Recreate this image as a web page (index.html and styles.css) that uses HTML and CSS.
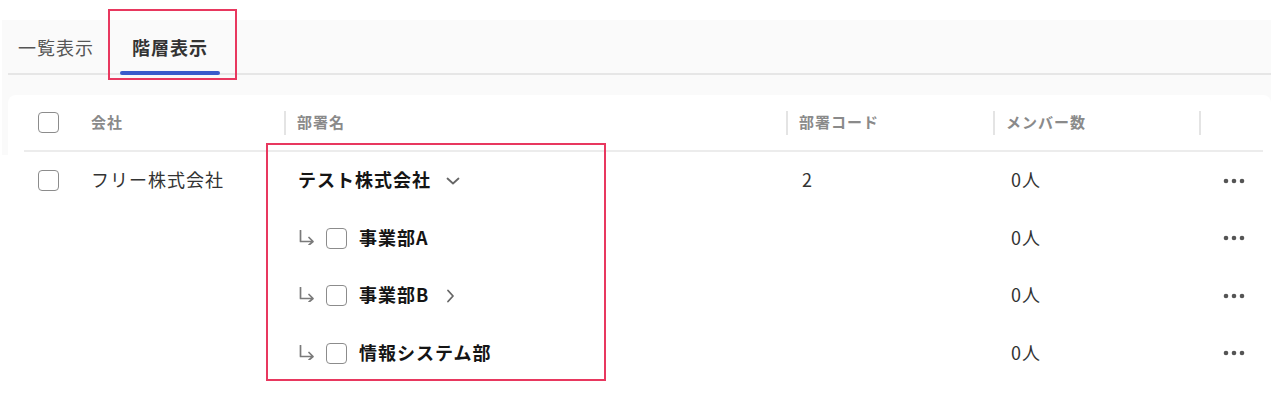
FILE: index.html
```html
<!DOCTYPE html>
<html lang="ja">
<head>
<meta charset="utf-8">
<title>部署</title>
<link rel="stylesheet" href="styles.css">
</head>
<body>
<div class="page">
  <div class="tabs">
    <div class="tab">一覧表示</div>
    <div class="tab active">階層表示</div>
  </div>
  <div class="card">
    <div class="row head">
      <div class="cell chk"><span class="box"></span></div>
      <div class="cell">会社</div>
      <div class="cell div">部署名</div>
      <div class="cell div">部署コード</div>
      <div class="cell div">メンバー数</div>
      <div class="cell div"></div>
    </div>
    <div class="row body">
      <div class="cell chk"><span class="box"></span></div>
      <div class="cell company"><span class="t">フリー株式会社</span></div>
      <div class="cell tree top">
        <span class="name t">テスト株式会社</span>
        <svg class="chev-down" width="14" height="8" viewBox="0 0 14 8"><path d="M1.5 1.5 L7 6.5 L12.5 1.5" fill="none" stroke="#666" stroke-width="1.8" stroke-linecap="round" stroke-linejoin="round"/></svg>
      </div>
      <div class="cell code"><span class="t">2</span></div>
      <div class="cell num"><span class="t">0人</span></div>
      <div class="cell more"><svg width="24" height="6" viewBox="0 0 24 6"><circle cx="3" cy="3" r="2.3" fill="#555"/><circle cx="11" cy="3" r="2.3" fill="#555"/><circle cx="19" cy="3" r="2.3" fill="#555"/></svg></div>
    </div>
    <div class="row body">
      <div class="cell chk"></div>
      <div class="cell company"></div>
      <div class="cell tree">
        <svg class="arrow" width="16" height="15" viewBox="0 0 16 15"><path d="M1.5 0.5 V11.5 H14 M10 7.5 L14 11.5 L10 15" fill="none" stroke="#7a7a7a" stroke-width="1.7" stroke-linecap="round" stroke-linejoin="round"/></svg>
        <span class="box"></span>
        <span class="name t">事業部A</span>
      </div>
      <div class="cell code"></div>
      <div class="cell num"><span class="t">0人</span></div>
      <div class="cell more"><svg width="24" height="6" viewBox="0 0 24 6"><circle cx="3" cy="3" r="2.3" fill="#555"/><circle cx="11" cy="3" r="2.3" fill="#555"/><circle cx="19" cy="3" r="2.3" fill="#555"/></svg></div>
    </div>
    <div class="row body">
      <div class="cell chk"></div>
      <div class="cell company"></div>
      <div class="cell tree">
        <svg class="arrow" width="16" height="15" viewBox="0 0 16 15"><path d="M1.5 0.5 V11.5 H14 M10 7.5 L14 11.5 L10 15" fill="none" stroke="#7a7a7a" stroke-width="1.7" stroke-linecap="round" stroke-linejoin="round"/></svg>
        <span class="box"></span>
        <span class="name t">事業部B</span>
        <svg class="chev-right" width="9" height="14" viewBox="0 0 9 14"><path d="M2 1.5 L7 7 L2 12.5" fill="none" stroke="#666" stroke-width="1.8" stroke-linecap="round" stroke-linejoin="round"/></svg>
      </div>
      <div class="cell code"></div>
      <div class="cell num"><span class="t">0人</span></div>
      <div class="cell more"><svg width="24" height="6" viewBox="0 0 24 6"><circle cx="3" cy="3" r="2.3" fill="#555"/><circle cx="11" cy="3" r="2.3" fill="#555"/><circle cx="19" cy="3" r="2.3" fill="#555"/></svg></div>
    </div>
    <div class="row body">
      <div class="cell chk"></div>
      <div class="cell company"></div>
      <div class="cell tree">
        <svg class="arrow" width="16" height="15" viewBox="0 0 16 15"><path d="M1.5 0.5 V11.5 H14 M10 7.5 L14 11.5 L10 15" fill="none" stroke="#7a7a7a" stroke-width="1.7" stroke-linecap="round" stroke-linejoin="round"/></svg>
        <span class="box"></span>
        <span class="name t">情報システム部</span>
      </div>
      <div class="cell code"></div>
      <div class="cell num"><span class="t">0人</span></div>
      <div class="cell more"><svg width="24" height="6" viewBox="0 0 24 6"><circle cx="3" cy="3" r="2.3" fill="#555"/><circle cx="11" cy="3" r="2.3" fill="#555"/><circle cx="19" cy="3" r="2.3" fill="#555"/></svg></div>
    </div>
  </div>
  <div class="mark mark-tab"></div>
  <div class="mark mark-tree"></div>
</div>
</body>
</html>
```

FILE: styles.css
```css
* { box-sizing: border-box; }
html, body { margin: 0; padding: 0; background: #fff; }
body {
  font-family: "Noto Sans CJK JP", "Noto Sans", sans-serif;
  color: #333;
  width: 1272px;
  height: 420px;
  overflow: hidden;
}
.page {
  position: relative;
  margin: 20px 1px 0 2px;
  padding-left: 6px;
  height: 400px;
  background: linear-gradient(#fafafa 0, #fafafa 135px, #fff 135px);
}
.tabs {
  display: flex;
  gap: 14px;
  height: 55px;
  border-bottom: 2px solid #e6e6e6;
}
.tab {
  position: relative;
  padding: 14px 12px 0;
  font-size: 18px;
  letter-spacing: 1px;
  line-height: 26px;
  color: #555;
}
.tab:first-child { padding-left: 10px; }
.tab.active { color: #333; font-weight: 700; }
.tab.active::after {
  content: "";
  position: absolute;
  left: 0;
  right: 0;
  bottom: -2px;
  height: 4px;
  border-radius: 2px;
  background: #3a5bcb;
}
.card {
  margin-top: 20px;
  background: #fff;
  border-radius: 8px;
  padding: 0 8px 0 16px;
}
.row {
  display: grid;
  grid-template-columns: 52px 208px 502px 207px 206px 63px;
  align-items: center;
}
.row.head {
  height: 57px;
  border-bottom: 2px solid #ececec;
  font-size: 15px;
  letter-spacing: 1px;
  font-weight: 700;
  color: #8a8a8a;
}
.row.body { height: 57.5px; font-size: 18px; letter-spacing: 1px; }
.cell { display: flex; align-items: center; white-space: nowrap; }
.head .cell { padding-left: 15px; height: 24px; line-height: 22px; padding-bottom: 2px; }
.head .cell.div { border-left: 2px solid #e4e4e4; padding-left: 11px; }
.head .cell.chk, .body .cell.chk { padding-left: 14px; }
.head .cell.chk { padding-bottom: 0; }
.box {
  display: inline-block;
  width: 21px;
  height: 21px;
  border: 1.5px solid #8c8c8c;
  border-radius: 4px;
  background: #fff;
  flex: none;
}
.t { line-height: 24px; padding-bottom: 3px; }
.company { padding-left: 15px; color: #333; }
.tree { padding-left: 15px; }
.tree.top { padding-left: 14px; }
.tree .name { font-weight: 700; color: #151515; }
.tree .arrow { margin-right: 11px; margin-top: -2px; flex: none; }
.tree .box { margin-right: 12px; }
.chev-down { margin-left: 15px; }
.chev-right { margin-left: 17px; }
.code { padding-left: 16px; }
.num { padding-left: 18px; }
.more { padding-left: 24px; }
.mark {
  position: absolute;
  border: 2px solid #e8385f;
  pointer-events: none;
}
.mark-tab { left: 106px; top: -11px; width: 129px; height: 71px; }
.mark-tree { left: 264px; top: 123px; width: 340px; height: 238px; }
```
